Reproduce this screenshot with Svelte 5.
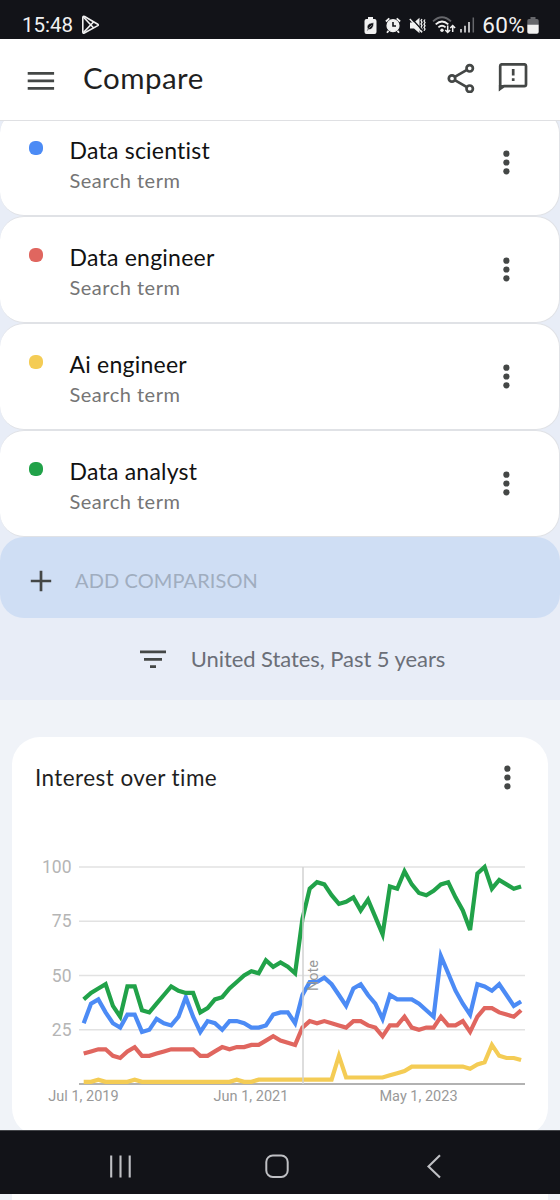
<script lang="ts">
	type Series = {
		name: string;
		color: string;
		values: number[];
	};

	// monthly values, Jul 2019 to Jul 2024
	const series: Series[] = [
		{
			name: 'Data scientist',
			color: '#4c8bf5',
			values: [
				28, 37, 39, 33, 28, 26, 32, 32, 24, 25, 30, 28, 27, 31, 40, 31, 24, 29, 28, 25, 29, 29, 28, 26, 26, 27, 32, 33,
				33, 28, 41, 47, 47, 49, 46, 41, 36, 44, 46, 41, 37, 30, 41, 39, 39, 39, 37, 34, 31, 59, 51, 43, 37, 32, 46, 45,
				43, 46, 41, 36, 38,
			],
		},
		{
			name: 'Data engineer',
			color: '#e0665f',
			values: [
				14, 15, 16, 16, 13, 12, 15, 17, 13, 13, 14, 15, 16, 16, 16, 16, 13, 13, 15, 17, 16, 17, 17, 18, 18, 20, 22, 20,
				19, 18, 26, 29, 28, 29, 28, 27, 26, 29, 29, 27, 26, 22, 27, 27, 31, 26, 25, 26, 26, 31, 27, 27, 29, 24, 31, 35,
				35, 33, 32, 31, 34,
			],
		},
		{
			name: 'Ai engineer',
			color: '#f4cc55',
			values: [
				1, 1, 2, 1, 1, 1, 1, 2, 1, 1, 1, 1, 1, 1, 1, 1, 1, 1, 1, 1, 1, 2, 1, 1, 2, 2, 2, 2, 2, 2, 2, 2, 2, 2, 2, 13, 3,
				3, 3, 3, 3, 3, 4, 5, 6, 8, 8, 8, 8, 8, 8, 8, 8, 7, 9, 10, 18, 13, 12, 12, 11,
			],
		},
		{
			name: 'Data analyst',
			color: '#21a249',
			values: [
				39, 42, 44, 46, 36, 31, 45, 45, 34, 33, 37, 41, 45, 43, 42, 42, 33, 35, 39, 40, 44, 47, 50, 52, 51, 57, 54, 56,
				54, 51, 76, 90, 93, 92, 87, 83, 84, 86, 80, 85, 77, 69, 91, 90, 98, 92, 88, 87, 89, 92, 93, 86, 80, 71, 97,
				100, 90, 94, 92, 90, 91,
			],
		},
	];

	const ticks = [100, 75, 50, 25];
	const labels = [
		{ x: 71.5, text: 'Jul 1, 2019' },
		{ x: 239, text: 'Jun 1, 2021' },
		{ x: 406.5, text: 'May 1, 2023' },
	];

	const left = 71.7;
	const step = 7.29;
	const base = 264;

	function yPos(v: number): number {
		return base - v * 2.17;
	}

	function points(values: number[]): string {
		return values.map((v, i) => `${(left + i * step).toFixed(1)},${yPos(v).toFixed(1)}`).join(' ');
	}
</script>

{#snippet more()}
	<svg class="more" width="8" height="26" viewBox="0 0 8 26" fill="#444746">
		<circle cx="4.4" cy="4.7" r="3.1" />
		<circle cx="4.4" cy="13.5" r="3.1" />
		<circle cx="4.4" cy="22.3" r="3.1" />
	</svg>
{/snippet}

<div class="screen">
	<div class="status">
		<span class="clock">15:48</span>
		<svg class="play" width="19" height="20" viewBox="0 0 19 20" fill="none" stroke="#f1f1f1" stroke-width="1.6" stroke-linejoin="round">
			<path d="M1.8 2.5v14.6q0 1.6 1.5.9L16.8 10.6q1-.7 0-1.4L3.6 1.5Q1.8.8 1.8 2.5z" />
			<path d="M2.4 2 12.7 13M2.4 17.6 12.7 6.8" />
		</svg>
		<div class="indicators">
			<svg width="13" height="17" viewBox="0 0 13 17">
				<path d="M4 0h5v2h1.5Q12.5 2 12.5 4v11q0 2-2 2h-8q-2 0-2-2V4q0-2 2-2H4z" fill="#f1f1f1" />
				<path d="M9.8 5.8Q4 6 3.3 9.3q-.3 1.4.5 2.6l-1 1.3.7.5 1-1.2q4.8.7 5.3-6.7zM4.6 11.3l3.2-3" fill="#121318" stroke="#f1f1f1" stroke-width=".5" />
			</svg>
			<svg width="16" height="17" viewBox="0 0 16 17" stroke="#f1f1f1" fill="none">
				<circle cx="8" cy="8.7" r="5.9" fill="#f1f1f1" stroke-width="1.4" />
				<path d="M8 5v4h3" stroke="#121318" stroke-width="1.6" />
				<path d="M.9 4.5 4.3 1.3M15.1 4.5l-3.4-3.2M3.5 13.8 2 15.8M12.5 13.8l1.5 2" stroke-width="1.8" />
			</svg>
			<svg width="17" height="17" viewBox="0 0 17 17" fill="none" stroke="#f1f1f1">
				<path d="M1 5.5h4L10.5.8v15.4L5 11.5H1z" fill="#f1f1f1" stroke="none" />
				<path d="M13 2l-1 1.5 1 1.7-1 1.7 1 1.7-1 1.7 1 1.7-1 1.7 1 1.5M16 2.5l-1 1.5 1 1.5-1 1.7 1 1.6-1 1.7 1 1.5-1 1.8" stroke-width="1.3" />
				<path d="M2.4 1.2 13.5 13.5" stroke="#121318" stroke-width="1.3" />
				<path d="M.8 2 13 15.4" stroke-width="1.4" />
			</svg>
			<svg class="wifi" width="24" height="18" viewBox="0 0 24 18" fill="none" stroke="#f1f1f1" stroke-width="1.8">
				<path d="M1 5.4Q10-2.8 19 5.4" stroke="#66676b" />
				<path d="M3.7 8.4q6.3-5.8 12.6 0M6.4 11.4q3.6-3.2 7.2 0" />
				<circle cx="10" cy="14.2" r="1.7" fill="#f1f1f1" stroke="none" />
				<path d="M15.7 9.5v6.6M13.3 14l2.4 2.5 2.4-2.5M20.7 16V9.8M18.3 12l2.4-2.5 2.4 2.5" stroke-width="1.5" />
			</svg>
			<svg class="signal" width="15" height="16" viewBox="0 0 15 16" stroke="#f1f1f1" stroke-width="1.5">
				<path d="M1 12v3.5M5 8.7v6.8M9 5v10.5" />
				<path d="M13.3.5v15" stroke="#66676b" />
			</svg>
			<span class="percent">60%</span>
			<svg width="12" height="17" viewBox="0 0 12 17">
				<path d="M3.5 0h5v2H10q1.7 0 1.7 1.7V8H.3V3.7Q.3 2 2 2h1.5z" fill="#66676b" />
				<path d="M.3 7.7h11.4V15q0 1.8-1.8 1.8H2.1Q.3 16.8.3 15z" fill="#f1f1f1" />
			</svg>
		</div>
	</div>

	<header>
		<svg class="menu" width="28" height="20" viewBox="0 0 28 20" stroke="#444746" stroke-width="2.7">
			<path d="M.7 2.4h26.4M.7 9.9h26.4M.7 17.4h26.4" />
		</svg>
		<h1>Compare</h1>
		<svg class="share" width="28" height="30" viewBox="0 0 28 30" fill="none" stroke="#444746" stroke-width="2.7">
			<circle cx="22.7" cy="5.3" r="3.2" />
			<circle cx="5" cy="15.5" r="3.2" />
			<circle cx="22.7" cy="25.7" r="3.2" />
			<path d="m7.8 13.9 12.1-7M7.8 17.1l12.1 7" />
		</svg>
		<svg width="30" height="30" viewBox="0 0 30 30" fill="none" stroke="#444746" stroke-width="2.7">
			<path d="M2.2 25.8V3q0-1.7 1.7-1.7h22.4Q28 1.3 28 3v18.5q0 1.7-1.7 1.7H6z" />
			<path d="M.9 22h6l-6 6.5z" fill="#444746" stroke="none" />
			<path d="M15.2 6v6.5M15.2 15.2v2.9" />
		</svg>
	</header>

	<div class="terms">
		{#each series as term}
			<div class="term">
				<span class="dot" style="background: {term.color}"></span>
				<div class="text">
					<div class="name">{term.name}</div>
					<div class="kind">Search term</div>
				</div>
				{@render more()}
			</div>
		{/each}
		<div class="add">
			<svg width="22" height="22" viewBox="0 0 22 22" stroke="#444746" stroke-width="2.7">
				<path d="M11 .8v20.4M.8 11h20.4" />
			</svg>
			<span>ADD COMPARISON</span>
		</div>
	</div>

	<div class="filter">
		<svg width="28" height="20" viewBox="0 0 28 20" stroke="#444746" stroke-width="2.7">
			<path d="M1 2.9h26M5 10.3h18M11 17.6h6" />
		</svg>
		<span>United States, Past 5 years</span>
	</div>

	<main>
		<section class="card">
			<div class="card-head">
				<h2>Interest over time</h2>
				{@render more()}
			</div>
			<svg class="chart" width="536" height="310" viewBox="0 0 536 310">
				{#each ticks as tick}
					<line x1="67" x2="513" y1={yPos(tick)} y2={yPos(tick)} stroke="#e2e2e2" stroke-width="1.5" />
					<text class="tick" x="59.5" y={yPos(tick) + 6} text-anchor="end">{tick}</text>
				{/each}
				<line x1="67" x2="513" y1={base} y2={base} stroke="#999" stroke-width="1.5" />
				{#each series as s}
					<polyline points={points(s.values)} fill="none" stroke={s.color} stroke-width="4.2" />
				{/each}
				<line x1="291" x2="291" y1="47" y2={base} stroke="#d2d2d2" stroke-width="1.5" />
				<text class="note" transform="translate(305.5 171) rotate(-90)">Note</text>
				{#each labels as label}
					<text class="date" x={label.x} y="281" text-anchor="middle">{label.text}</text>
				{/each}
			</svg>
		</section>
	</main>

	<nav>
		<svg width="24" height="26" viewBox="0 0 24 26" stroke="#bfc0c4" stroke-width="2.1">
			<path d="M2.2 1.5v22M11.5 1.5v22M20.7 1.5v22" />
		</svg>
		<svg class="home" width="24" height="26" viewBox="0 0 24 26" fill="none" stroke="#bfc0c4" stroke-width="2">
			<rect x="1.3" y="1.5" width="21.4" height="21.4" rx="6.5" />
		</svg>
		<svg width="16" height="26" viewBox="0 0 16 26" fill="none" stroke="#bfc0c4" stroke-width="2.1">
			<path d="M14 1.2 2.5 12.4 14 23.6" />
		</svg>
	</nav>
	<div class="sliver"></div>
</div>

<style>
	:global(body) {
		background: #f0f3f8;
	}

	.screen {
		width: 560px;
		height: 1200px;
		overflow: hidden;
		display: flex;
		flex-direction: column;
		background: #f0f3f8;
		font-family: Lato, sans-serif;
		font-variant-ligatures: none;
	}

	svg {
		display: block;
		flex: none;
	}

	.status {
		box-sizing: border-box;
		flex: none;
		height: 39px;
		padding: 11px 21px 0 22px;
		display: flex;
		align-items: center;
		background: #121318;
		color: #f1f1f1;
		font-family: Roboto, sans-serif;
		font-size: 20.5px;
		line-height: 28px;
	}

	.play {
		margin-left: 8px;
	}

	.indicators {
		display: flex;
		align-items: center;
		gap: 8px;
		margin-left: auto;
	}

	.wifi {
		margin-left: -2px;
	}

	.signal {
		margin-left: -4px;
	}

	.percent {
		margin: 0 -6px 0 -1px;
		font-size: 22.5px;
		letter-spacing: 0.3px;
	}

	header {
		position: relative;
		box-sizing: border-box;
		flex: none;
		height: 82px;
		padding: 0 32px 3px 27px;
		display: flex;
		align-items: center;
		background: #fff;
		border-bottom: 1px solid #dfe0e3;
	}

	.menu {
		margin-top: 5px;
	}

	h1 {
		flex: 1;
		margin: 0 0 2px 28px;
		font-size: 29.5px;
		font-weight: 400;
		letter-spacing: 0.5px;
		color: #1f1f1f;
	}

	.share {
		margin-right: 23px;
	}

	.terms {
		flex: none;
		margin-top: -12px;
		background: #e8edf7;
	}

	.term {
		box-sizing: border-box;
		height: 107px;
		padding: 25px 49px 0 29px;
		display: flex;
		align-items: flex-start;
		background: #fff;
		border: 1px solid #e0e2e6;
		border-left: 0;
		border-radius: 24px;
	}

	.dot {
		width: 13.5px;
		height: 14px;
		margin-top: 6px;
		border-radius: 6px;
	}

	.text {
		flex: 1;
		margin-left: 27px;
	}

	.name {
		font-size: 23px;
		line-height: 30px;
		letter-spacing: 0.23px;
		color: #111;
	}

	.kind {
		font-size: 20px;
		line-height: 30px;
		letter-spacing: 0.5px;
		color: #757575;
	}

	.term .more {
		margin-top: 14px;
	}

	.add {
		box-sizing: border-box;
		height: 81px;
		padding: 6px 30px 0;
		display: flex;
		align-items: center;
		gap: 23px;
		background: #cfdef4;
		border-radius: 24px;
		font-size: 20px;
		letter-spacing: 0.1px;
		color: #a0adbf;
	}

	.add span {
		margin-bottom: 2px;
	}

	.filter {
		flex: none;
		height: 82px;
		display: flex;
		align-items: center;
		justify-content: center;
		gap: 24px;
		padding-left: 24px;
		background: #e8edf7;
		font-size: 22px;
		letter-spacing: -0.06px;
		color: #6b6f78;
	}

	.filter span {
		margin-bottom: 2px;
	}

	main {
		flex: none;
		box-sizing: border-box;
		height: 430px;
		padding: 37px 12px 0;
	}

	.card {
		height: 399px;
		background: #fff;
		border-radius: 28px;
	}

	.card-head {
		box-sizing: border-box;
		height: 83px;
		padding: 0 37px 3px 23px;
		display: flex;
		align-items: center;
		justify-content: space-between;
	}

	h2 {
		margin: 0;
		font-size: 22.5px;
		font-weight: 400;
		letter-spacing: 0.42px;
		color: #1f1f1f;
	}

	.tick,
	.date,
	.note {
		font-family: Roboto, sans-serif;
		fill: #b5b5b5;
	}

	.tick {
		font-size: 17.5px;
	}

	.date {
		font-size: 14.5px;
		fill: #999;
	}

	.note {
		font-size: 14.5px;
		fill: #999;
	}

	nav {
		position: relative;
		box-sizing: border-box;
		flex: none;
		height: 64px;
		padding: 8px 118px 0 109px;
		display: flex;
		align-items: center;
		justify-content: space-between;
		background: #121318;
		border-top: 1px solid #44464a;
	}

	.home {
		margin-right: 6px;
	}

	.sliver {
		flex: none;
		height: 6px;
		margin: 0 12px;
		background: #fff;
	}
</style>
